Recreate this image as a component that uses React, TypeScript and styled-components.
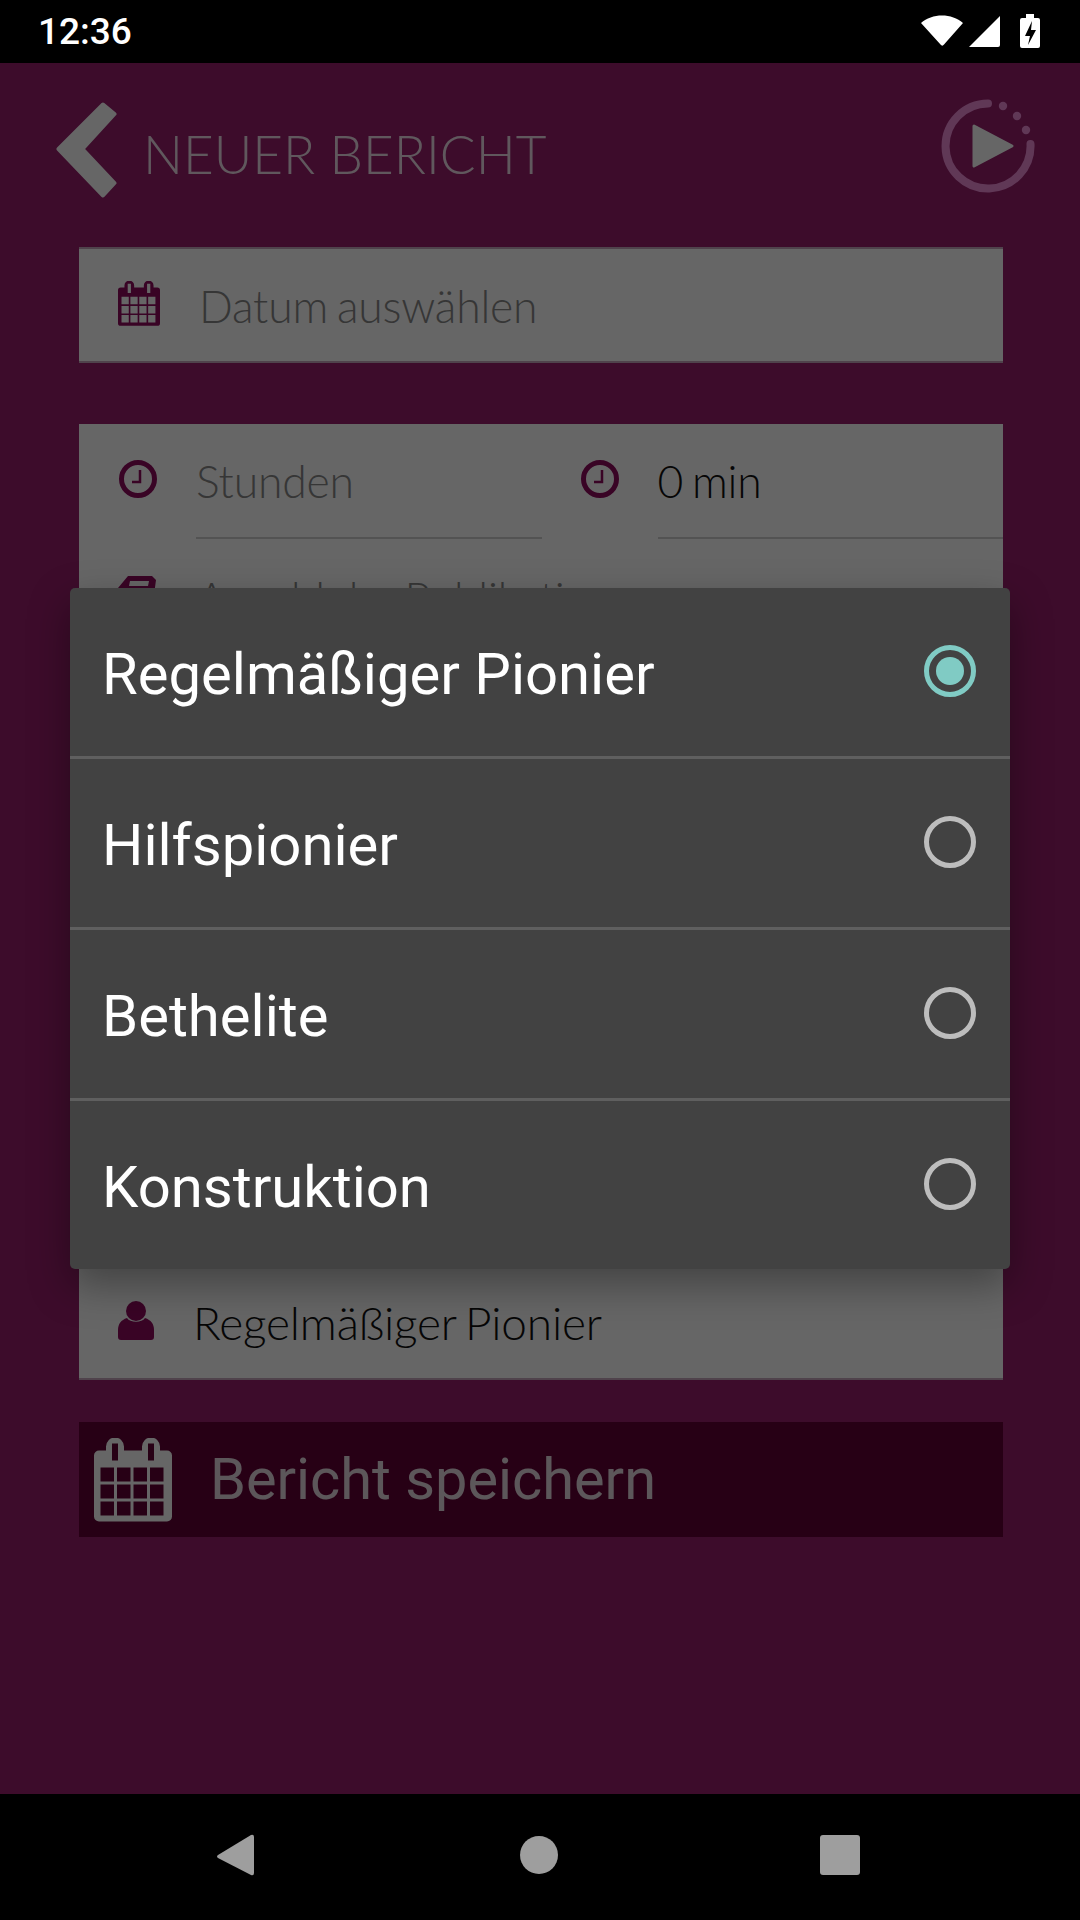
import React from "react";
import styled, { createGlobalStyle } from "styled-components";

const PURPLE = "#981f6c";
const ICON_DARK = "#900a5e";

const GlobalStyle = createGlobalStyle`
  html, body {
    margin: 0;
    padding: 0;
    background: #000;
  }
  * {
    box-sizing: border-box;
  }
`;

const Device = styled.div`
  width: 1080px;
  height: 1920px;
  display: flex;
  flex-direction: column;
  overflow: hidden;
  font-family: "Lato", "Liberation Sans", sans-serif;
`;

const StatusBar = styled.div`
  height: 63px;
  flex: none;
  background: #000;
  display: flex;
  align-items: center;
  justify-content: space-between;
  padding: 0 38px;
  color: #fff;
  font: 500 37px "Roboto", sans-serif;
`;

const StatusIcons = styled.svg`
  width: 120px;
  height: 63px;
  margin-right: 1px;
`;

const Screen = styled.div`
  flex: 1;
  position: relative;
  background: ${PURPLE};
  display: flex;
  flex-direction: column;
`;

const Header = styled.div`
  height: 184px;
  flex: none;
  display: flex;
  align-items: flex-start;
  padding: 33px 42px 0 56px;
`;

const BackIcon = styled.svg`
  width: 61px;
  height: 96px;
  margin-top: 6px;
  flex: none;
`;

const Title = styled.div`
  flex: 1;
  margin: 28px 0 0 26px;
  color: #fff;
  font-size: 53px;
  font-weight: 300;
  line-height: 60px;
  opacity: 0.85;
  white-space: nowrap;
`;

const TimerIcon = styled.svg`
  width: 100px;
  height: 100px;
  flex: none;
`;

const Content = styled.div`
  padding: 0 77px 0 79px;
  display: flex;
  flex-direction: column;
`;

const Field = styled.div`
  height: 116px;
  background: #fff;
  border-top: 2px solid #c9a8bd;
  border-bottom: 2px solid #c9a8bd;
  display: flex;
  align-items: center;
  padding-left: 39px;
  margin-bottom: 61px;
`;

const FieldIcon = styled.span`
  display: flex;
  margin-top: -3px;
`;

const Placeholder = styled.span<{ $left: number; $dark?: boolean }>`
  margin-left: ${(p) => p.$left}px;
  font-size: 44.5px;
  font-weight: 300;
  letter-spacing: -0.2px;
  word-spacing: -3px;
  color: ${(p) => (p.$dark ? "#111" : "#888")};
  white-space: nowrap;
`;

const RoleValue = styled(Placeholder)`
  font-size: 46px;
  margin-top: 4px;
`;

const Card = styled.div`
  height: 956px;
  background: #fff;
  display: flex;
  flex-direction: column;
  margin-bottom: 42px;
  border-bottom: 2px solid #c9a8bd;
`;

const TimeRow = styled.div`
  height: 115px;
  display: flex;
  padding-left: 39px;
`;

const TimeCell = styled.div<{ $width: number; $gap?: number }>`
  width: ${(p) => p.$width}px;
  margin-left: ${(p) => p.$gap ?? 0}px;
  display: flex;
  align-items: center;
  height: 115px;
`;

const Underlined = styled.div`
  flex: 1;
  height: 115px;
  margin-left: 38px;
  border-bottom: 2px solid #d0d0d0;
  display: flex;
  align-items: center;
`;

const CardRow = styled.div<{ $pushDown?: boolean }>`
  height: 116px;
  display: flex;
  align-items: center;
  padding-left: 39px;
  margin-top: ${(p) => (p.$pushDown ? "auto" : "0")};
`;

const SaveButton = styled.div`
  height: 115px;
  background: #620035;
  display: flex;
  align-items: center;
  padding-left: 15px;
  color: #fff;
  font: 400 57.7px "Roboto", sans-serif;
  gap: 38px;
`;

const SaveLabel = styled.span`
  opacity: 0.85;
  margin-top: -2px;
`;

const Scrim = styled.div`
  position: absolute;
  inset: 0;
  background: rgba(0, 0, 0, 0.6);
  display: flex;
  align-items: center;
  justify-content: center;
`;

const Dialog = styled.div`
  width: 940px;
  background: #424242;
  border-radius: 5px;
  box-shadow: 0 16px 40px rgba(0, 0, 0, 0.35);
  display: flex;
  flex-direction: column;
`;

const Option = styled.div`
  height: 171px;
  padding: 0 34px 3px 32px;
  display: flex;
  align-items: center;
  justify-content: space-between;
  border-bottom: 3px solid #5f5f5f;
  color: #fff;
  font: 400 58px "Roboto", sans-serif;

  &:last-child {
    height: 168px;
    border-bottom: 0;
  }
`;

const OptionLabel = styled.span`
  padding-top: 6px;
`;

const Radio = styled.span<{ $checked?: boolean }>`
  width: 52px;
  height: 52px;
  border-radius: 50%;
  border: 5px solid ${(p) => (p.$checked ? "#80cbc4" : "#bdbdbd")};
  display: flex;
  align-items: center;
  justify-content: center;

  &::after {
    content: "";
    width: 28px;
    height: 28px;
    border-radius: 50%;
    background: ${(p) => (p.$checked ? "#80cbc4" : "transparent")};
  }
`;

const NavBar = styled.div`
  height: 126px;
  flex: none;
  background: #000;
  display: flex;
  justify-content: center;
  align-items: center;
  gap: 257px;
  padding: 0 3px 4px 0;
`;

const NavIcon = styled.svg`
  width: 44px;
  height: 44px;
  fill: #9e9e9e;
`;

const buildCalendarPath = () => {
  let d =
    "M5 12h7V8a9 9 0 0 1 18 0v4h18V8a9 9 0 0 1 18 0v4h7a5 5 0 0 1 5 5v61a5 5 0 0 1-5 5H5a5 5 0 0 1-5-5V17a5 5 0 0 1 5-5z";
  d += "M18 5v17h6V5zM54 5v17h6V5z";
  for (let r = 0; r < 3; r++) {
    for (let c = 0; c < 4; c++) {
      const x = 6.5 + c * 16.5;
      const y = 29 + r * 17;
      d += `M${x} ${y}h13.5v14h-13.5z`;
    }
  }
  return d;
};

const CalendarIcon = ({ width, height, color }: { width: number; height: number; color: string }) => (
  <svg width={width} height={height} viewBox="0 0 78 83" style={{ flex: "none" }}>
    <path d={buildCalendarPath()} fill={color} fillRule="evenodd" />
  </svg>
);

const ClockIcon = () => (
  <svg width="40" height="40" viewBox="0 0 40 40" style={{ flex: "none", marginTop: -6 }}>
    <circle cx="20" cy="20" r="16.5" fill="none" stroke={ICON_DARK} strokeWidth="5" />
    <path d="M22 11v12H14" fill="none" stroke={ICON_DARK} strokeWidth="2.500" />
  </svg>
);

const BookIcon = () => (
  <svg width="38" height="40" viewBox="0 0 38 40" style={{ flex: "none", marginTop: -2 }}>
    <path
      d="M10 0h24l4 4-3 22H6L0 34V12zM12 5l-1 5h19l1-5z"
      fill={ICON_DARK}
      fillRule="evenodd"
    />
  </svg>
);

const PersonIcon = () => (
  <svg width="36" height="39" viewBox="0 0 36 39" style={{ flex: "none" }}>
    <ellipse cx="18" cy="10" rx="10" ry="10" fill={ICON_DARK} />
    <path
      d="M9 17c3 5 15 5 18 0 6 2 9 6 9 12v7a3 3 0 0 1-3 3H3a3 3 0 0 1-3-3v-7c0-6 3-10 9-12z"
      fill={ICON_DARK}
    />
  </svg>
);

const OPTIONS = ["Regelmäßiger Pionier", "Hilfspionier", "Bethelite", "Konstruktion"];

export default function App() {
  return (
    <Device>
      <GlobalStyle />
      <StatusBar>
        <span>12:36</span>
        <StatusIcons viewBox="0 0 120 63">
          <path d="M0 23c11-10 31-10 42 0L23 44.500c-1 1.500-2.500 1.500-3.500 0z" fill="#fff" />
          <path d="M79 16v29a2 2 0 0 1-2 2H48z" fill="#fff" />
          <path
            fillRule="evenodd"
            fill="#fff"
            d="M105 14h8v4h4a2 2 0 0 1 2 2v26a2 2 0 0 1-2 2h-16a2 2 0 0 1-2-2V20a2 2 0 0 1 2-2h4zM111 21l-7 15h5l-2 9 8-15h-5z"
          />
        </StatusIcons>
      </StatusBar>
      <Screen>
        <Header>
          <BackIcon viewBox="0 0 61 96">
            <path
              d="M47 2.500 58.500 12 26.500 47 58.500 81 47 93.500 2.500 47z"
              fill="#fff"
              stroke="#fff"
              strokeWidth="4"
              strokeLinejoin="round"
            />
          </BackIcon>
          <Title>NEUER BERICHT</Title>
          <TimerIcon viewBox="0 0 100 100">
            <path
              d="M50 7.500A42.500 42.500 0 1 0 92.500 48"
              fill="none"
              stroke="#f08cd8"
              strokeWidth="8"
              strokeLinecap="round"
            />
            <circle cx="65" cy="10" r="4.200" fill="#f08cd8" />
            <circle cx="79" cy="20" r="4.200" fill="#f08cd8" />
            <circle cx="88" cy="34" r="4.200" fill="#f08cd8" />
            <path d="M36 30 74 50 36 70z" fill="#fff" stroke="#fff" strokeWidth="3" strokeLinejoin="round" />
          </TimerIcon>
        </Header>
        <Content>
          <Field>
            <FieldIcon>
              <CalendarIcon width={42} height={45} color={ICON_DARK} />
            </FieldIcon>
            <Placeholder $left={39}>Datum auswählen</Placeholder>
          </Field>
          <Card>
            <TimeRow>
              <TimeCell $width={424}>
                <ClockIcon />
                <Underlined>
                  <Placeholder $left={0}>Stunden</Placeholder>
                </Underlined>
              </TimeCell>
              <TimeCell $width={424} $gap={38}>
                <ClockIcon />
                <Underlined>
                  <Placeholder $left={0} $dark>
                    0 min
                  </Placeholder>
                </Underlined>
              </TimeCell>
            </TimeRow>
            <CardRow>
              <BookIcon />
              <Placeholder $left={41}>Anzahl der Publikationen</Placeholder>
            </CardRow>
            <CardRow $pushDown>
              <PersonIcon />
              <RoleValue $left={39} $dark>
                Regelmäßiger Pionier
              </RoleValue>
            </CardRow>
          </Card>
          <SaveButton>
            <CalendarIcon width={78} height={84} color="#fff" />
            <SaveLabel>Bericht speichern</SaveLabel>
          </SaveButton>
        </Content>
        <Scrim>
          <Dialog>
            {OPTIONS.map((label, i) => (
              <Option key={label}>
                <OptionLabel>{label}</OptionLabel>
                <Radio $checked={i === 0} />
              </Option>
            ))}
          </Dialog>
        </Scrim>
      </Screen>
      <NavBar>
        <NavIcon viewBox="0 0 44 44">
          <path d="M2 22 35 2q3-1 3 2v36q0 3-3 2L2 25q-2-1.500 0-3z" />
        </NavIcon>
        <NavIcon viewBox="0 0 44 44">
          <circle cx="22" cy="22" r="19" />
        </NavIcon>
        <NavIcon viewBox="0 0 44 44">
          <rect x="2" y="2" width="40" height="40" rx="3" />
        </NavIcon>
      </NavBar>
    </Device>
  );
}
